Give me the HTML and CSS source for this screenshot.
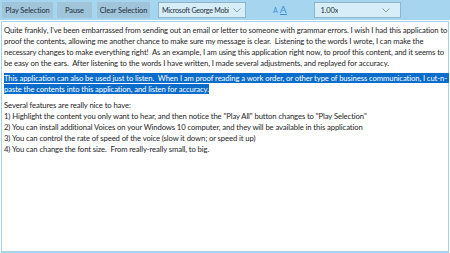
FILE: index.html
```html
<!DOCTYPE html>
<html lang="en">
<head>
  <meta charset="UTF-8" />
  <title>Proof Reader</title>
  <link rel="stylesheet" href="styles.css">
</head>
<body>

  <!-- Toolbar -->
  <div class="toolbar">
    <button class="btn btn-play">Play Selection</button>
    <button class="btn btn-pause">Pause</button>
    <button class="btn btn-clear">Clear Selection</button>
    <div class="combo combo-voice">
      <span class="combo-text">Microsoft George Mobi</span>
      <svg class="chev" width="8" height="5" viewBox="0 0 8 5"><path d="M0.5 0.5 L4 4 L7.5 0.5" fill="none" stroke="#7a8a96" stroke-width="0.8"/></svg>
    </div>
    <div class="font-size">
      <span class="a-small">A</span><span class="a-big">A</span>
    </div>
    <div class="combo combo-rate">
      <span class="combo-text">1.00x</span>
      <svg class="chev" width="8" height="5" viewBox="0 0 8 5"><path d="M0.5 0.5 L4 4 L7.5 0.5" fill="none" stroke="#7a8a96" stroke-width="0.8"/></svg>
    </div>
  </div>

  <!-- Editor -->
  <div class="editor">
    <div class="para">
      <div class="line">Quite frankly, I've been embarrassed from sending out an email or letter to someone with grammar errors. I wish I had this application to</div>
      <div class="line">proof the contents, allowing me another chance to make sure my message is clear.&nbsp; Listening to the words I wrote, I can make the</div>
      <div class="line">necessary changes to make everything right!&nbsp; As an example, I am using this application right now, to proof this content, and it seems to</div>
      <div class="line">be easy on the ears.&nbsp; After listening to the words I have written, I made several adjustments, and replayed for accuracy.</div>
    </div>
    <div class="para para-sel">
      <div class="line"><span class="sel sel-full">This application can also be used just to listen.&nbsp; When I am proof reading a work order, or other type of business communication, I cut-n-</span></div>
      <div class="line"><span class="sel">paste the contents into this application, and listen for accuracy.</span></div>
    </div>
    <div class="para">
      <div class="line">Several features are really nice to have:</div>
      <div class="line">1) Highlight the content you only want to hear, and then notice the "Play All" button changes to "Play Selection"</div>
      <div class="line">2) You can install additional Voices on your Windows 10 computer, and they will be available in this application</div>
      <div class="line">3) You can control the rate of speed of the voice (slow it down; or speed it up)</div>
      <div class="line">4) You can change the font size.&nbsp; From really-really small, to big.</div>
    </div>
  </div>

</body>
</html>
```

FILE: styles.css
```css
body {
  margin: 0;
  font-family: Lato, 'Liberation Sans', sans-serif;
  background: #ffffff;
  color: #1e1e1e;
}

.toolbar {
  display: flex;
  align-items: center;
  height: 20px;
  background: #a6d6ef;
  padding: 0 2px;
}

.btn {
  height: 16px;
  margin-right: 3px;
  padding: 0;
  border: none;
  background: #a0c4d9;
  color: #1f2f3a;
  font-family: inherit;
  font-size: 7.5px;
  letter-spacing: -0.1px;
  white-space: nowrap;
}

.btn-play { width: 51px; }
.btn-pause { width: 35px; margin-left: 1px; }
.btn-clear { width: 53px; margin-left: 2px; }

.combo {
  display: flex;
  align-items: center;
  justify-content: space-between;
  box-sizing: border-box;
  height: 16px;
  padding: 0 4px 0 4px;
  background: #d7edf8;
  border: 1px solid #8fb5cb;
  font-size: 7.5px;
  letter-spacing: -0.15px;
  color: #1f2f3a;
}

.combo-text {
  white-space: nowrap;
  overflow: hidden;
}

.chev {
  flex-shrink: 0;
  margin-left: 2px;
}

.combo-voice {
  width: 88px;
  margin-left: 5px;
  padding-left: 3px;
  padding-right: 4px;
  font-size: 7.1px;
  letter-spacing: -0.25px;
}

.combo-rate { width: 87px; margin-left: 27px; padding-left: 6px; padding-right: 10px; }

.font-size {
  margin-left: 27px;
  display: flex;
  align-items: baseline;
  color: #3c8fd9;
}

.a-small { font-size: 7px; margin-right: 2px; }
.a-big { font-size: 10px; border-bottom: 1px solid #3c8fd9; line-height: 9px; }

.editor {
  box-sizing: border-box;
  height: 232px;
  margin: 1px 1px 0 1px;
  border: 1px solid #a8d3ea;
  border-bottom-width: 2px;
  padding: 3px 2px;
  font-size: 7.7px;
  letter-spacing: -0.1px;
}

.para {
  margin-bottom: 4px;
}

.para-sel {
  margin-bottom: 5px;
}

.line {
  white-space: nowrap;
  line-height: 11px;
}

.sel {
  background: #0a6ccb;
  color: #ffffff;
}

.sel-full {
  padding-right: 2px;
}
```
